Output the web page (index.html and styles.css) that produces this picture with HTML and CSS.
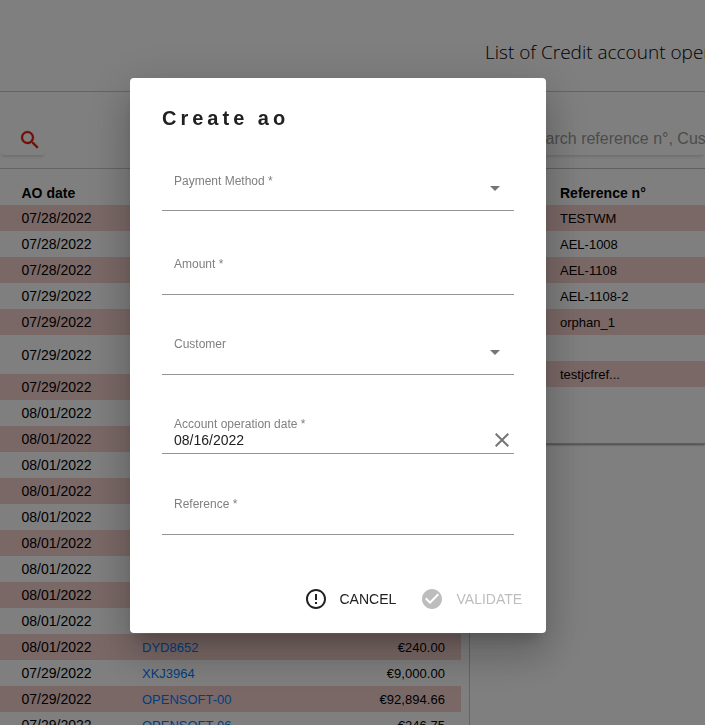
FILE: index.html
```html
<!DOCTYPE html>
<html lang="en">
<head>
<meta charset="utf-8">
<title>Credit account operations</title>
<link rel="stylesheet" href="styles.css">
</head>
<body>
<div class="page">
  <header class="page-header"><h1>List of Credit account operations</h1></header>
  <div class="toolbar">
    <div class="search search-left">
      <svg width="24" height="24" viewBox="0 0 24 24" fill="#e0200a" stroke="#e0200a" stroke-width=".3"><path d="M15.5 14h-.79l-.28-.27A6.471 6.471 0 0 0 16 9.5 6.5 6.5 0 1 0 9.5 16c1.61 0 3.09-.59 4.23-1.57l.27.28v.79l5 4.99L20.49 19l-4.99-5zm-6 0C7.01 14 5 11.99 5 9.5S7.01 5 9.5 5 14 7.01 14 9.5 11.99 14 9.5 14z"/></svg>
    </div>
    <div class="search search-right">Search reference n°, Customer</div>
  </div>
  <main class="panels">
    <section class="panel-left">
      <div class="row head"><span>AO date</span></div>
      <div class="row pink"><span>07/28/2022</span></div>
      <div class="row"><span>07/28/2022</span></div>
      <div class="row pink"><span>07/28/2022</span></div>
      <div class="row"><span>07/29/2022</span></div>
      <div class="row pink"><span>07/29/2022</span></div>
      <div class="row tall"><span>07/29/2022</span></div>
      <div class="row pink"><span>07/29/2022</span></div>
      <div class="row"><span>08/01/2022</span></div>
      <div class="row pink"><span>08/01/2022</span></div>
      <div class="row"><span>08/01/2022</span></div>
      <div class="row pink"><span>08/01/2022</span></div>
      <div class="row"><span>08/01/2022</span></div>
      <div class="row pink"><span>08/01/2022</span></div>
      <div class="row"><span>08/01/2022</span></div>
      <div class="row pink"><span>08/01/2022</span></div>
      <div class="row"><span>08/01/2022</span></div>
      <div class="row pink"><span>08/01/2022</span><a>DYD8652</a><b>€240.00</b></div>
      <div class="row"><span>07/29/2022</span><a>XKJ3964</a><b>€9,000.00</b></div>
      <div class="row pink"><span>07/29/2022</span><a>OPENSOFT-00</a><b>€92,894.66</b></div>
      <div class="row"><span>07/29/2022</span><a>OPENSOFT-06</a><b>€246.75</b></div>
    </section>
    <section class="panel-right">
      <div class="row head">Reference n°</div>
      <div class="row pink">TESTWM</div>
      <div class="row">AEL-1008</div>
      <div class="row pink">AEL-1108</div>
      <div class="row">AEL-1108-2</div>
      <div class="row pink">orphan_1</div>
      <div class="row"></div>
      <div class="row pink">testjcfref...</div>
    </section>
  </main>
</div>
<div class="backdrop">
  <div class="dialog">
    <h2>Create ao</h2>
    <div class="field payment"><label>Payment Method *</label><i class="arrow"></i></div>
    <div class="field amount"><label>Amount *</label></div>
    <div class="field customer"><label>Customer</label><i class="arrow"></i></div>
    <div class="field date"><label>Account operation date *</label><div class="value">08/16/2022</div>
      <svg class="clear" width="14" height="14" viewBox="0 0 14 14" fill="none" stroke="#757575" stroke-width="2"><path d="M.7.7l12.6 12.6M13.3.7L.7 13.3"/></svg>
    </div>
    <div class="field reference"><label>Reference *</label></div>
    <div class="actions">
      <svg width="24" height="24" viewBox="0 0 24 24" fill="#212121"><path d="M11 15h2v2h-2zm0-8h2v6h-2zm.99-5C6.47 2 2 6.48 2 12s4.47 10 9.99 10C17.52 22 22 17.52 22 12S17.52 2 11.99 2zM12 20c-4.42 0-8-3.58-8-8s3.58-8 8-8 8 3.58 8 8-3.58 8-8 8z"/></svg>
      <span class="cancel">CANCEL</span>
      <svg width="24" height="24" viewBox="0 0 24 24" fill="#bdbdbd"><path d="M12 2C6.48 2 2 6.48 2 12s4.48 10 10 10 10-4.480 10-10S17.520 2 12 2zm-2 15l-5-5 1.410-1.410L10 14.170l7.590-7.590L19 8l-9 9z"/></svg>
      <span class="validate">VALIDATE</span>
    </div>
  </div>
</div>
</body>
</html>
```
FILE: styles.css
```css
* { box-sizing: border-box; }
html, body { margin: 0; height: 100%; overflow: hidden; }
body { background: #fff; color: #000; font: 14px/26px "Liberation Sans", Arial, sans-serif; }
h1, h2 { margin: 0; }
.page { width: 705px; height: 725px; overflow: hidden; }
.page-header { height: 92px; padding: 38px 0 0 485px; border-bottom: 1px solid #c8c8c8; white-space: nowrap; }
.page-header h1 { font: 300 19px/28px "Open Sans", sans-serif; color: #000; }
.toolbar { height: 77px; padding-top: 30px; display: flex; justify-content: space-between; border-bottom: 1px solid #c8c8c8; }
.search { height: 33px; border-radius: 0 0 4px 4px; box-shadow: 0 3px 3px -1px rgba(0, 0, 0, .13); }
.search-left { width: 45px; padding: 6px 0 0 18px; }
.search-right { width: 190px; padding: 4px 0 0 11px; font-size: 16px; color: #999; white-space: nowrap; overflow: hidden; }
.panels { display: grid; grid-template-columns: 470px 1fr; align-items: start; }
.panel-left { height: 556px; padding: 10px 8px 0 0; border-right: 1px solid #c8c8c8; overflow: hidden; }
.panel-right { height: 275px; padding-top: 10px; border-bottom: 1px solid #bbb; box-shadow: 0 1px 2px rgba(0, 0, 0, .45); }
.row { height: 26px; display: flex; align-items: center; font-size: 13px; }
.panel-left .row { padding-left: 21.5px; padding-right: 16px; }
.panel-right .row { padding: 2px 0 0 90px; }
.row.head { font-size: 14px; font-weight: bold; padding-top: 2px; }
.pink { background: #f5d1cd; }
.row.tall { height: 39px; }
.row span { width: 120.5px; font-size: 14px; }
.row a { flex: 1; padding-top: 2px; color: #007bff; }
.row b { padding-top: 2px; font-weight: normal; letter-spacing: .05px; }
.backdrop { position: fixed; inset: 0; padding: 78px 0 0 130px; background: rgba(0, 0, 0, .5); }
.dialog { width: 416px; height: 555px; padding: 25px 32px 0; background: #fff; border-radius: 4px; box-shadow: 0 11px 15px -7px rgba(0, 0, 0, .2), 0 24px 38px 3px rgba(0, 0, 0, .14), 0 9px 46px 8px rgba(0, 0, 0, .12); display: flex; flex-direction: column; }
.dialog h2 { height: 56px; font-size: 20px; line-height: 30px; letter-spacing: 4px; color: #212121; }
.field { position: relative; flex: none; border-bottom: 1px solid #949494; padding: 14px 12px 0; line-height: 16px; }
.field label { display: block; font-size: 12px; color: #808080; }
.payment { height: 52px; }
.amount { height: 84px; padding-top: 45px; }
.customer { height: 80px; padding-top: 41px; }
.date { height: 79px; padding-top: 41px; }
.reference { height: 81px; padding-top: 42px; }
.value { color: #212121; }
.arrow { position: absolute; right: 14px; bottom: 19px; border: 5px solid transparent; border-top-color: #757575; border-bottom: 0; }
.clear { position: absolute; right: 5px; bottom: 6px; }
.actions { display: flex; align-items: center; height: 26px; margin-top: 51px; padding-left: 142px; white-space: nowrap; }
.cancel { flex: none; width: 80px; margin-left: 11.5px; color: #212121; }
.validate { margin-left: 13px; color: #bdbdbd; }
.actions svg { flex: none; }
```
